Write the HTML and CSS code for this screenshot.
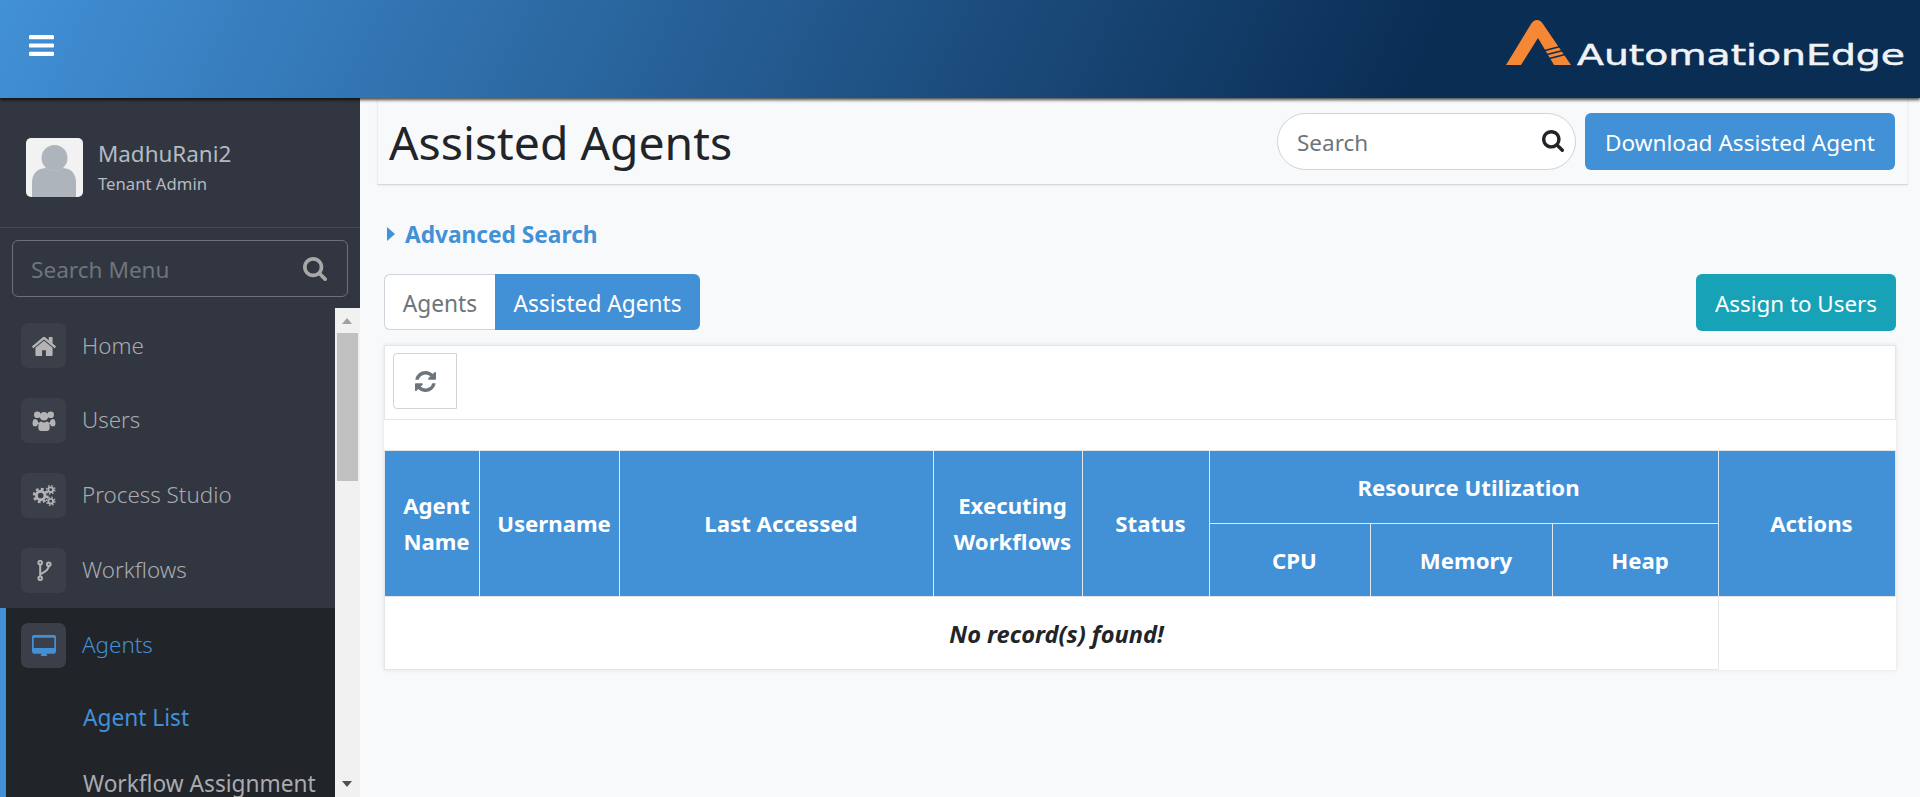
FILE: index.html
```html
<!DOCTYPE html>
<html lang="en">
<head>
    <meta charset="UTF-8">
    <meta name="viewport" content="width=device-width, initial-scale=1.0">
    <title>Assisted Agents</title>
    <link rel="stylesheet" href="styles.css">
</head>
<body>
    <header class="topbar">
        <button class="menu-toggle" aria-label="Toggle menu">
            <svg viewBox="128 256 1536 1280" class="bars-icon"><path d="M1664 1344v128q0 26-19 45t-45 19H192q-26 0-45-19t-19-45v-128q0-26 19-45t45-19h1408q26 0 45 19t19 45zm0-512v128q0 26-19 45t-45 19H192q-26 0-45-19t-19-45V832q0-26 19-45t45-19h1408q26 0 45 19t19 45zm0-512v128q0 26-19 45t-45 19H192q-26 0-45-19t-19-45V320q0-26 19-45t45-19h1408q26 0 45 19t19 45z"/></svg>
        </button>
        <div class="logo">
            <svg viewBox="0 0 65 45" class="logo-mark">
                <path fill="#f58735" d="M0 45 L25 4 Q27.500 0 31 0 Q34.500 0 37 4 L65 45 L48 45 L32 18 L15 45 Z"/>
                <path fill="none" stroke="#0a2d54" stroke-width="1.500" d="M39 30.500 L56 26 M41 34.500 L59 30 M43.500 38.500 L61 34"/>
            </svg>
            <svg viewBox="0 0 328 54" class="logo-text">
                <text x="0" y="45" textLength="328" lengthAdjust="spacingAndGlyphs">AutomationEdge</text>
            </svg>
        </div>
    </header>

    <div class="layout">
        <aside class="sidebar">
            <div class="user-box">
                <div class="avatar">
                    <svg viewBox="0 0 57 59"><circle cx="28.500" cy="20" r="13" fill="#aeb4bb"/><path fill="#aeb4bb" d="M6 59 V45 Q6 31 20 30 Q28.500 36 37 30 Q50 31 50 45 V59 Z"/></svg>
                </div>
                <div class="user-info">
                    <div class="user-name">MadhuRani2</div>
                    <div class="user-role">Tenant Admin</div>
                </div>
            </div>
            <div class="menu-search">
                <span class="menu-search-text">Search Menu</span>
                <svg viewBox="64 128 1664 1664" class="menu-search-icon"><path d="M1216 832q0-185-131.500-316.500T768 384 451.500 515.500 320 832t131.500 316.500T768 1280t316.500-131.500T1216 832zm512 832q0 52-38 90t-90 38q-54 0-90-38l-343-342q-179 124-399 124-143 0-273.500-55.500t-225-150-150-225T64 832t55.500-273.500 150-225 225-150T768 128t273.500 55.500 225 150 150 225T1472 832q0 220-124 399l343 343q37 37 37 90z"/></svg>
            </div>
            <div class="menu-wrap">
                <nav class="menu">
                    <a class="menu-item">
                        <span class="menu-icon"><svg viewBox="96 128 1600 1408"><path d="M1472 992v480q0 26-19 45t-45 19h-384v-384H768v384H384q-26 0-45-19t-19-45V992q0-1 .5-3t.5-3l575-474 575 474q1 2 1 6zm223-69l-62 74q-8 9-21 11h-3q-13 0-21-7L896 424l-692 577q-12 8-24 7-13-2-21-11l-62-74q-8-10-7-23.500t11-21.500l719-599q32-26 76-26t76 26l244 204V288q0-14 9-23t23-9h192q14 0 23 9t9 23v408l219 182q10 8 11 21.500t-7 23.500z"/></svg></span>
                        <span class="menu-label">Home</span>
                    </a>
                    <a class="menu-item">
                        <span class="menu-icon"><svg viewBox="0 0 24 22"><circle cx="5" cy="5" r="3.500"/><circle cx="19" cy="5" r="3.500"/><circle cx="12" cy="6.500" r="4.500"/><path d="M0 14 Q0 9.500 3 9.500 L5 10.500 Q5.500 13 7 14 Q5 15 4.500 17 H1 Q0 17 0 14 Z M24 14 Q24 9.500 21 9.500 L19 10.500 Q18.500 13 17 14 Q19 15 19.500 17 H23 Q24 17 24 14 Z M6 18 Q6 12 9 12 Q12 14 15 12 Q18 12 18 18 Q18 22 15 22 H9 Q6 22 6 18 Z"/></svg></span>
                        <span class="menu-label">Users</span>
                    </a>
                    <a class="menu-item">
                        <span class="menu-icon"><svg viewBox="0 0 24 22"><g fill="none" stroke="currentColor"><circle cx="8.500" cy="11" r="4.500" stroke-width="3"/><circle cx="8.500" cy="11" r="7" stroke-width="2.500" stroke-dasharray="3 2.500"/><circle cx="19" cy="5" r="2.500" stroke-width="2"/><circle cx="19" cy="5" r="4.300" stroke-width="1.500" stroke-dasharray="1.600 1.800"/><circle cx="19" cy="17" r="2.500" stroke-width="2"/><circle cx="19" cy="17" r="4.300" stroke-width="1.500" stroke-dasharray="1.600 1.800"/></g></svg></span>
                        <span class="menu-label">Process Studio</span>
                    </a>
                    <a class="menu-item">
                        <span class="menu-icon"><svg viewBox="0 0 24 22"><g fill="none" stroke="currentColor" stroke-width="2.100"><circle cx="8" cy="2.800" r="1.900"/><circle cx="8" cy="19.200" r="1.900"/><circle cx="17" cy="4.500" r="1.900"/><path d="M8 4.700 V17.300 M17 6.400 Q17 11 8 15"/></g></svg></span>
                        <span class="menu-label">Workflows</span>
                    </a>
                    <div class="menu-group">
                        <a class="menu-item active">
                            <span class="menu-icon"><svg viewBox="0 0 1792 1536"><path d="M1664 960V256q0-13-9.500-22.500T1632 224H160q-13 0-22.500 9.500T128 256v704q0 13 9.500 22.500T160 992h1472q13 0 22.500-9.500T1664 960zM1792 160v1088q0 66-47 113t-113 47h-544q0 37 16 77t32 71 16 44q0 26-19 45t-45 19H704q-26 0-45-19t-19-45q0-14 16-44t32-71 16-77H160q-66 0-113-47T0 1248V160Q0 94 47 47T160 0h1472q66 0 113 47t47 113z" transform="translate(0 -30)"/></svg></span>
                            <span class="menu-label">Agents</span>
                        </a>
                        <a class="sub-item current">Agent List</a>
                        <a class="sub-item">Workflow Assignment</a>
                    </div>
                </nav>
                <div class="fake-scroll">
                    <span class="arrow-up"></span>
                    <span class="scroll-thumb"></span>
                    <span class="arrow-down"></span>
                </div>
            </div>
        </aside>

        <main class="content">
            <div class="page-head">
                <h1>Assisted Agents</h1>
                <div class="page-actions">
                    <div class="search-pill">
                        <span class="pill-text">Search</span>
                        <svg viewBox="64 128 1664 1664" class="pill-icon"><path d="M1216 832q0-185-131.500-316.500T768 384 451.500 515.500 320 832t131.500 316.500T768 1280t316.500-131.500T1216 832zm512 832q0 52-38 90t-90 38q-54 0-90-38l-343-342q-179 124-399 124-143 0-273.500-55.500t-225-150-150-225T64 832t55.500-273.500 150-225 225-150T768 128t273.500 55.500 225 150 150 225T1472 832q0 220-124 399l343 343q37 37 37 90z"/></svg>
                    </div>
                    <button class="btn btn-blue btn-download">Download Assisted Agent</button>
                </div>
            </div>

            <div class="body-wrap">
                <a class="advanced"><span class="caret"></span>Advanced Search</a>

                <div class="tab-row">
                    <div class="tabs">
                        <button class="tab">Agents</button>
                        <button class="tab tab-on">Assisted Agents</button>
                    </div>
                    <button class="btn btn-teal">Assign to Users</button>
                </div>

                <div class="panel">
                    <div class="toolbar">
                        <button class="refresh">
                            <svg viewBox="128 128 1536 1536"><path d="M1639 1056q0 5-1 7-64 268-268 434.500T892 1664q-146 0-282.500-55T366 1452l-129 129q-19 19-45 19t-45-19-19-45v-448q0-26 19-45t45-19h448q26 0 45 19t19 45-19 45l-137 137q71 66 161 102t187 36q134 0 250-65t186-179q11-17 53-117 8-23 30-23h192q13 0 22.500 9.500t9.500 22.500zm25-800v448q0 26-19 45t-45 19h-448q-26 0-45-19t-19-45 19-45l138-138Q1117 384 896 384q-134 0-250 65T460 628q-11 17-53 117-8 23-30 23H178q-13 0-22.500-9.500T146 736v-7q65-268 270-434.500T896 128q146 0 284 55.500T1425 340l130-129q19-19 45-19t45 19 19 45z"/></svg>
                        </button>
                    </div>
                    <div class="spacer"></div>
                    <table class="grid">
                        <colgroup>
                            <col class="c-name"><col class="c-user"><col class="c-last"><col class="c-exec"><col class="c-status"><col class="c-cpu"><col class="c-mem"><col class="c-heap"><col class="c-act">
                        </colgroup>
                        <thead>
                            <tr>
                                <th rowspan="2">Agent Name</th>
                                <th rowspan="2">Username</th>
                                <th rowspan="2">Last Accessed</th>
                                <th rowspan="2">Executing Workflows</th>
                                <th rowspan="2">Status</th>
                                <th colspan="3">Resource Utilization</th>
                                <th rowspan="2">Actions</th>
                            </tr>
                            <tr>
                                <th>CPU</th>
                                <th>Memory</th>
                                <th>Heap</th>
                            </tr>
                        </thead>
                        <tbody>
                            <tr>
                                <td colspan="8" class="empty">No record(s) found!</td>
                                <td class="empty-act"></td>
                            </tr>
                        </tbody>
                    </table>
                </div>
            </div>
        </main>
    </div>
</body>
</html>
```

FILE: styles.css
```css
* {
    box-sizing: border-box;
}
html, body {
    height: 100%;
}
body {
    font-family: "Noto Sans", "Open Sans", Arial, sans-serif;
    margin: 0;
    background-color: #f8f9fa;
    color: #212529;
    display: flex;
    flex-direction: column;
    overflow: hidden;
}
button {
    font-family: inherit;
}
svg {
    display: block;
    fill: currentColor;
}

/* top bar */
.topbar {
    height: 98px;
    flex: none;
    display: flex;
    align-items: flex-start;
    justify-content: space-between;
    background: linear-gradient(115deg, #4290d6 0%, #0a2d54 74%);
    box-shadow: 0 2px 3px rgba(0, 0, 0, 0.7);
    position: relative;
    z-index: 5;
}
.menu-toggle {
    background: none;
    border: none;
    color: #fff;
    padding: 0;
    margin: 35px 0 0 29px;
}
.bars-icon {
    width: 25px;
    height: 21px;
}
.logo {
    display: flex;
    align-items: flex-start;
    margin: 20px 15px 0 0;
    gap: 6px;
}
.logo-mark {
    width: 65px;
    height: 45px;
}
.logo-text {
    width: 328px;
    height: 54px;
    overflow: visible;
}
.logo-text text {
    font-family: "DejaVu Sans", sans-serif;
    font-size: 29px;
    fill: #f0f2f5;
    stroke: #f0f2f5;
    stroke-width: 0.5px;
}

.layout {
    flex: 1;
    display: flex;
    min-height: 0;
}

/* sidebar */
.sidebar {
    width: 360px;
    flex: none;
    background-color: #323640;
    display: flex;
    flex-direction: column;
}
.user-box {
    height: 130px;
    flex: none;
    padding: 40px 0 0 26px;
    display: flex;
    gap: 15px;
    border-bottom: 1px solid #454952;
}
.avatar {
    width: 57px;
    height: 59px;
    background-color: #f2f2f2;
    border-radius: 5px;
    overflow: hidden;
}
.user-name {
    color: #b4bac2;
    font-size: 22.400px;
    line-height: 30px;
    padding-top: 1px;
}
.user-role {
    color: #b4bac2;
    font-size: 16.700px;
    line-height: 24px;
    margin-top: 3px;
}
.menu-search {
    flex: none;
    height: 57px;
    margin: 12px 12px 11px;
    padding: 0 20px 0 18px;
    border: 1px solid #6c7078;
    border-radius: 6px;
    display: flex;
    align-items: center;
    justify-content: space-between;
    color: #6c757d;
    font-size: 22.600px;
}
.menu-search-text {
    padding-top: 2px;
}
.menu-search-icon {
    width: 24px;
    height: 24px;
    color: #a8a8a8;
}
.menu-wrap {
    flex: 1;
    min-height: 0;
    display: flex;
}
.menu {
    flex: 1;
    overflow: hidden;
}
.menu-item {
    height: 75px;
    display: flex;
    align-items: center;
    gap: 16px;
    padding-left: 21px;
    color: #a8abb0;
    font-size: 22.400px;
    font-weight: 300;
}
.menu-label {
    margin-bottom: 3px;
}
.menu-item:first-child .menu-label {
    margin-bottom: 0;
}
.menu-icon {
    width: 45px;
    height: 45px;
    background-color: #3b3f4a;
    border-radius: 7px;
    display: flex;
    align-items: center;
    justify-content: center;
    color: #b4b4b4;
}
.menu-icon svg {
    width: 24px;
    height: 21px;
}
.menu-group {
    background-color: #212429;
    border-left: 6px solid #4290d6;
    height: 189px;
}
.menu-group .menu-item {
    padding-left: 15px;
    color: #4290d6;
}
.menu-group .menu-item .menu-label {
    margin-bottom: 3px;
}
.menu-item.active .menu-icon {
    color: #4290d6;
}
.sub-item {
    display: block;
    height: 65px;
    padding: 19px 0 0 77px;
    color: #a8abb0;
    font-size: 22.700px;
    line-height: 32px;
    white-space: nowrap;
}
.sub-item + .sub-item {
    padding-top: 20px;
}
.sub-item.current {
    color: #4290d6;
}
.fake-scroll {
    width: 25px;
    flex: none;
    background-color: #f1f1f1;
    position: relative;
    padding-top: 25px;
}
.scroll-thumb {
    display: block;
    width: 21px;
    height: 148px;
    margin-left: 2px;
    background-color: #c1c1c1;
}
.arrow-up, .arrow-down {
    position: absolute;
    left: 7px;
    width: 0;
    height: 0;
    border-left: 5.500px solid transparent;
    border-right: 5.500px solid transparent;
}
.arrow-up {
    top: 10px;
    border-bottom: 6px solid #a0a0a0;
}
.arrow-down {
    bottom: 10px;
    border-top: 6px solid #505050;
}

/* main content */
.content {
    flex: 1;
    min-width: 0;
    padding: 0 12px 0 17px;
}
.page-head {
    height: 87px;
    display: flex;
    align-items: center;
    justify-content: space-between;
    padding: 0 12px;
    border-bottom: 1px solid #d5d8dc;
    border-left: 1px solid #eceef0;
    border-right: 1px solid #eceef0;
    box-shadow: 0 1px 2px rgba(0, 0, 0, 0.06);
}
h1 {
    margin: 4px 0 0;
    font-size: 46.300px;
    font-weight: 400;
    line-height: 60px;
    margin-left: -1px;
}
.page-actions {
    display: flex;
    align-items: center;
    gap: 9px;
}
.search-pill {
    width: 299px;
    height: 57px;
    background-color: #fff;
    border: 1px solid #ced4da;
    border-radius: 29px;
    display: flex;
    align-items: center;
    justify-content: space-between;
    padding: 0 11px 0 19px;
    color: #6c757d;
    font-size: 22.500px;
}
.pill-text {
    padding-top: 2px;
}
.pill-icon {
    width: 22px;
    height: 22px;
    color: #212529;
}
.btn {
    border: none;
    border-radius: 6px;
    color: #fff;
    font-size: 22.600px;
    height: 57px;
    padding: 2px 0 0;
}
.btn-blue {
    background-color: #4290d6;
}
.btn-download {
    width: 310px;
}
.btn-teal {
    background-color: #17a2b8;
    width: 200px;
    font-size: 22.400px;
}
.body-wrap {
    padding: 0 12px 0 7px;
}
.advanced {
    display: flex;
    align-items: center;
    height: 36px;
    margin-top: 31px;
    padding-left: 3px;
    color: #4290d6;
    font-size: 22.700px;
    font-weight: 700;
}
.caret {
    width: 0;
    height: 0;
    border-top: 7.500px solid transparent;
    border-bottom: 7.500px solid transparent;
    border-left: 8px solid #4290d6;
    margin-right: 10px;
}
.tab-row {
    display: flex;
    justify-content: space-between;
    margin-top: 22px;
}
.tabs {
    display: flex;
    height: 56px;
}
.tab {
    border: 1px solid #ced4da;
    border-right: none;
    background-color: #fff;
    color: #6c757d;
    font-size: 22.700px;
    width: 111px;
    border-radius: 6px 0 0 6px;
    padding: 2px 0 0;
}
.tab-on {
    background-color: #4290d6;
    border: none;
    color: #fff;
    width: 205px;
    border-radius: 0 6px 6px 0;
}
.panel {
    margin-top: 14px;
    background-color: #fff;
    box-shadow: 0 0 4px rgba(0, 0, 0, 0.1);
}
.toolbar {
    height: 75px;
    padding: 7px 8px;
    border: 1px solid #e4e6ea;
}
.refresh {
    width: 64px;
    height: 56px;
    background-color: #fff;
    border: 1px solid #ced4da;
    border-radius: 4px 0 0 4px;
    color: #6c757d;
    display: flex;
    align-items: center;
    justify-content: center;
    padding: 0;
}
.refresh svg {
    width: 21px;
    height: 21px;
}
.spacer {
    height: 30px;
}
.grid {
    width: 100%;
    table-layout: fixed;
    border-collapse: collapse;
}
.c-name { width: 95px; }
.c-user { width: 140px; }
.c-last { width: 314px; }
.c-exec { width: 149px; }
.c-status { width: 127px; }
.c-cpu { width: 161px; }
.c-mem { width: 182px; }
.c-heap { width: 166px; }
.grid th {
    background-color: #4290d6;
    color: #fff;
    font-size: 22.200px;
    font-weight: 700;
    line-height: 36px;
    height: 73px;
    padding: 1px 0 0 9px;
    border: 1px solid #e4e6ea;
    text-align: center;
}
.empty {
    height: 73px;
    padding: 2px 0 0 10px;
    text-align: center;
    font-size: 23.600px;
    font-weight: 700;
    font-style: italic;
    border: 1px solid #e4e6ea;
}
.empty-act {
    border-left: 1px solid #e4e6ea;
}
```
